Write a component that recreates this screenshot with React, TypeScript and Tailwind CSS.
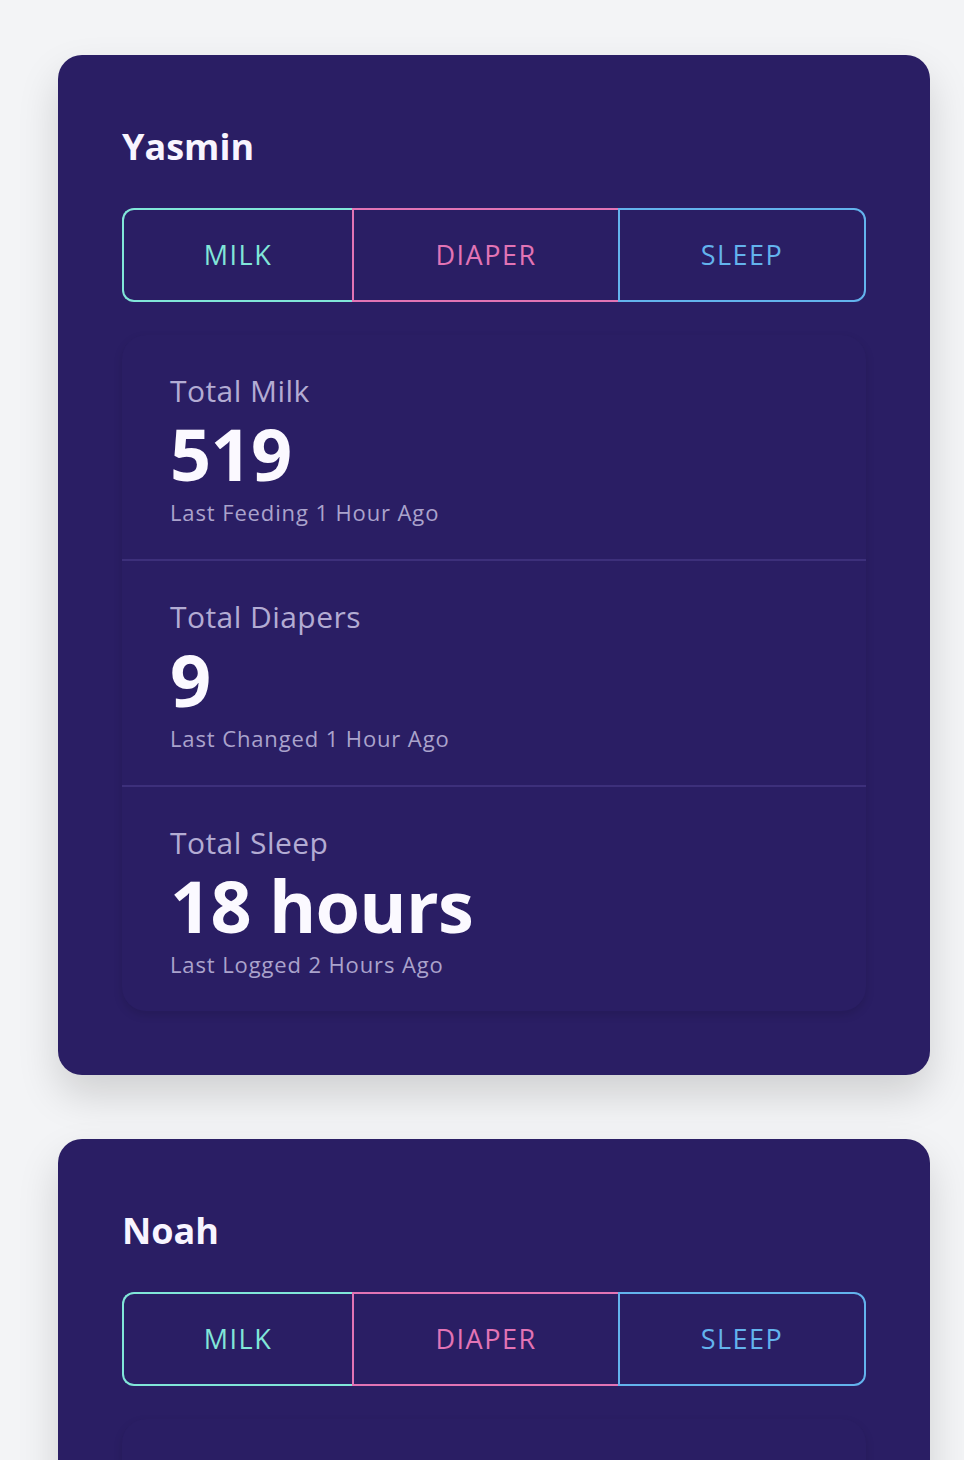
import React from 'react'

type Stat = { label: string; value: string; note: string }

const babies: { name: string; stats: Stat[] }[] = [
    {
        name: 'Yasmin',
        stats: [
            { label: 'Total Milk', value: '519', note: 'Last Feeding 1 Hour Ago' },
            { label: 'Total Diapers', value: '9', note: 'Last Changed 1 Hour Ago' },
            { label: 'Total Sleep', value: '18 hours', note: 'Last Logged 2 Hours Ago' },
        ],
    },
    {
        name: 'Noah',
        stats: [
            { label: 'Total Milk', value: '402', note: 'Last Feeding 2 Hours Ago' },
            { label: 'Total Diapers', value: '7', note: 'Last Changed 3 Hours Ago' },
            { label: 'Total Sleep', value: '16 hours', note: 'Last Logged 1 Hour Ago' },
        ],
    },
]

function Tabs() {
    return (
        <div className="mt-[39px] flex h-[94px]">
            <button className="w-[230px] rounded-l-xl border-y-2 border-l-2 border-[#81e6d9] text-[27px] tracking-[1.5px] text-[#81e6d9]">
                MILK
            </button>
            <button className="w-[266px] border-y-2 border-l-2 border-[#e274b5] text-[27px] tracking-[1.5px] text-[#e274b5]">
                DIAPER
            </button>
            <button className="flex-1 rounded-r-xl border-2 border-[#63b3ed] text-[27px] tracking-[1.5px] text-[#63b3ed]">
                SLEEP
            </button>
        </div>
    )
}

function BabyCard({ name, stats }: { name: string; stats: Stat[] }) {
    return (
        <div className="rounded-[24px] bg-[#2a1e64] px-16 pt-[70px] pb-16 shadow-[0_20px_40px_rgba(0,0,0,0.15)]">
            <h2 className="text-[36px] leading-[44px] font-bold text-[#f8f5ff]">{name}</h2>
            <Tabs />
            <div className="mt-[33px] divide-y-2 divide-[#3d307b] rounded-3xl bg-[#2a1e64] shadow-[0_4px_10px_rgba(0,0,0,0.12)]">
                {stats.map((s) => (
                    <div key={s.label} className="px-12 pt-[38px] pb-[33px]">
                        <div className="text-[30px] leading-[36px] tracking-[0.015em] text-[#b3acd3]">{s.label}</div>
                        <div className="mt-2 text-[72px] leading-[72px] font-bold tracking-[-0.01em] text-[#fbf9ff]">{s.value}</div>
                        <div className="mt-[9px] text-[22px] leading-[28px] tracking-[0.04em] text-[#aaa3cc]">{s.note}</div>
                    </div>
                ))}
            </div>
        </div>
    )
}

export default function App() {
    return (
        <div className="min-h-screen bg-[#f3f4f6] pl-[58px] pr-[34px] pt-[55px] pb-16 font-['Open_Sans','Noto_Sans',sans-serif]">
            <div className="flex flex-col gap-16">
                {babies.map((b) => (
                    <BabyCard key={b.name} name={b.name} stats={b.stats} />
                ))}
            </div>
        </div>
    )
}
